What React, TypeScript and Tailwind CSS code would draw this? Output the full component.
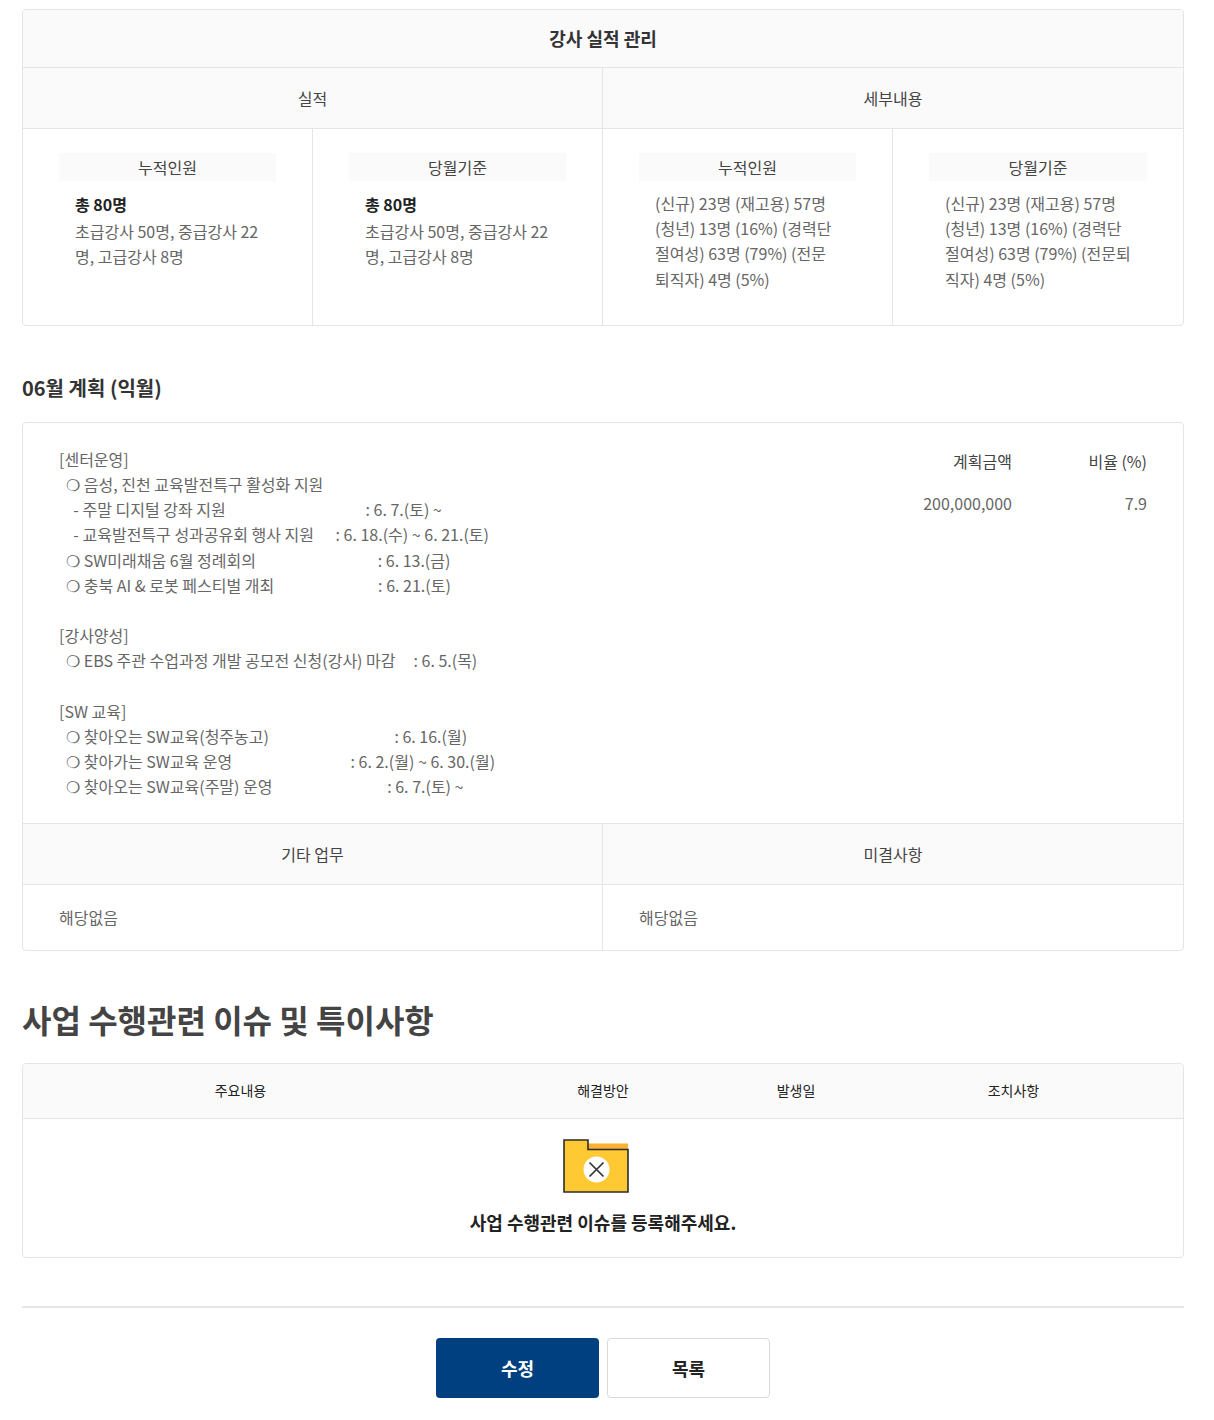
const font = { fontFamily: '"Noto Sans CJK KR", "Noto Sans", sans-serif' };

const planLines = [
  "[센터운영]",
  "  ❍ 음성, 진천 교육발전특구 활성화 지원",
  "    - 주말 디지털 강좌 지원                                       : 6. 7.(토) ~",
  "    - 교육발전특구 성과공유회 행사 지원      : 6. 18.(수) ~ 6. 21.(토)",
  "  ❍ SW미래채움 6월 정례회의                                  : 6. 13.(금)",
  "  ❍ 충북 AI & 로봇 페스티벌 개최                             : 6. 21.(토)",
  "",
  "[강사양성]",
  "  ❍ EBS 주관 수업과정 개발 공모전 신청(강사) 마감     : 6. 5.(목)",
  "",
  "[SW 교육]",
  "  ❍ 찾아오는 SW교육(청주농고)                                   : 6. 16.(월)",
  "  ❍ 찾아가는 SW교육 운영                                 : 6. 2.(월) ~ 6. 30.(월)",
  "  ❍ 찾아오는 SW교육(주말) 운영                                : 6. 7.(토) ~",
];

const HeadCell = ({ children, border }: { children: string; border?: boolean }) => (
  <div
    className={`flex h-[61px] items-center justify-center border-b border-[#e5e5e5] bg-[#fafafa] text-[16px] text-[#444] ${
      border ? "border-r" : ""
    }`}
  >
    {children}
  </div>
);

const StatCell = ({
  title,
  total,
  lines,
  border,
}: {
  title: string;
  total?: string;
  lines: string[];
  border?: boolean;
}) => (
  <div className={`px-9 pt-6 pb-[23px] ${border ? "border-r border-[#e5e5e5]" : ""}`}>
    <div className="flex h-7 items-center justify-center bg-[#fafafa] text-[16px] text-[#444]">{title}</div>
    <div className="mt-[10px] px-4 text-[16px] leading-[25.2px] text-[#666]">
      {total && <div className="mb-[2px] pt-px font-bold text-[#222]">{total}</div>}
      {lines.map((line) => (
        <div key={line}>{line}</div>
      ))}
    </div>
  </div>
);

const Folder = () => (
  <svg width="66" height="54" viewBox="0 0 66 54" className="mr-[14px] block">
    <rect x="24" y="4.5" width="41" height="6" fill="#f9b233" />
    <path d="M1 1h24v9.5h40V53H1z" fill="#ffc933" stroke="#2b2b2b" strokeWidth="1.6" />
    <circle cx="33.5" cy="30.5" r="13" fill="#fff" />
    <path d="M26.5 23.5l14 14M40.5 23.5l-14 14" stroke="#333" strokeWidth="1.7" fill="none" />
  </svg>
);

const App = () => {
  const basic = ["초급강사 50명, 중급강사 22", "명, 고급강사 8명"];

  return (
    <div className="min-h-[1420px] bg-white pt-[9px] pr-[30px] pl-[22px]" style={font}>
      <div className="overflow-hidden rounded-[4px] border border-[#e5e5e5]">
        <div className="flex h-[58px] items-center justify-center border-b border-[#e5e5e5] bg-[#fafafa] text-[18px] font-bold text-[#333]">
          강사 실적 관리
        </div>
        <div className="grid grid-cols-2">
          <HeadCell border>실적</HeadCell>
          <HeadCell>세부내용</HeadCell>
        </div>
        <div className="grid h-[196px] grid-cols-4">
          <StatCell title="누적인원" total="총 80명" lines={basic} border />
          <StatCell title="당월기준" total="총 80명" lines={basic} border />
          <StatCell
            title="누적인원"
            lines={["(신규) 23명 (재고용) 57명", "(청년) 13명 (16%) (경력단", "절여성) 63명 (79%) (전문", "퇴직자) 4명 (5%)"]}
            border
          />
          <StatCell
            title="당월기준"
            lines={["(신규) 23명 (재고용) 57명", "(청년) 13명 (16%) (경력단", "절여성) 63명 (79%) (전문퇴", "직자) 4명 (5%)"]}
          />
        </div>
      </div>

      <h3 className="mt-[44px] text-[20px] leading-[36px] font-bold text-[#333]">06월 계획 (익월)</h3>

      <div className="mt-4 overflow-hidden rounded-[4px] border border-[#e5e5e5]">
        <div className="flex h-[400px] justify-between px-9 pt-[23.8px]">
          <div className="text-[16px] leading-[25.2px] whitespace-pre text-[#666]">
            {planLines.map((line, i) => (
              <div key={i} className="h-[25.2px]">
                {line}
              </div>
            ))}
          </div>
          <div className="mt-[2px] grid h-max grid-cols-[auto_135px] text-right text-[16px] leading-[25.2px]">
            <div className="text-[#444]">계획금액</div>
            <div className="text-[#444]">비율 (%)</div>
            <div className="mt-[17px] text-[#666]">200,000,000</div>
            <div className="mt-[17px] text-[#666]">7.9</div>
          </div>
        </div>
        <div className="grid grid-cols-2 border-t border-[#e5e5e5]">
          <HeadCell border>기타 업무</HeadCell>
          <HeadCell>미결사항</HeadCell>
          <div className="flex h-[65px] items-center border-r border-[#e5e5e5] px-9 pb-[2px] text-[16px] text-[#666]">해당없음</div>
          <div className="flex h-[65px] items-center px-9 pb-[2px] text-[16px] text-[#666]">해당없음</div>
        </div>
      </div>

      <h2 className="mt-[41px] text-[32px] leading-[54px] font-bold text-[#444]">사업 수행관련 이슈 및 특이사항</h2>

      <div className="mt-[17px] overflow-hidden rounded-[4px] border border-[#e5e5e5]">
        <div className="grid h-[55px] grid-cols-[435px_290px_96px_1fr] items-center border-b border-[#e5e5e5] bg-[#fafafa] pb-[2px] text-center text-[14px] text-[#222]">
          <div>주요내용</div>
          <div>해결방안</div>
          <div>발생일</div>
          <div>조치사항</div>
        </div>
        <div className="flex h-[138px] flex-col items-center pt-[20px]">
          <Folder />
          <p className="mt-[16px] text-[18px] leading-[26px] font-bold text-[#222]">사업 수행관련 이슈를 등록해주세요.</p>
        </div>
      </div>

      <div className="mt-12 flex justify-center gap-2 border-t-2 border-[#e5e5e5] pt-[30px]">
        <button className="flex h-[60px] w-[163px] items-center justify-center rounded-[4px] bg-[#004080] text-[18px] font-bold text-white">
          수정
        </button>
        <button className="flex h-[60px] w-[163px] items-center justify-center rounded-[4px] border border-[#d9d9d9] bg-white text-[18px] font-bold text-[#222]">
          목록
        </button>
      </div>
    </div>
  );
};

export default App;
